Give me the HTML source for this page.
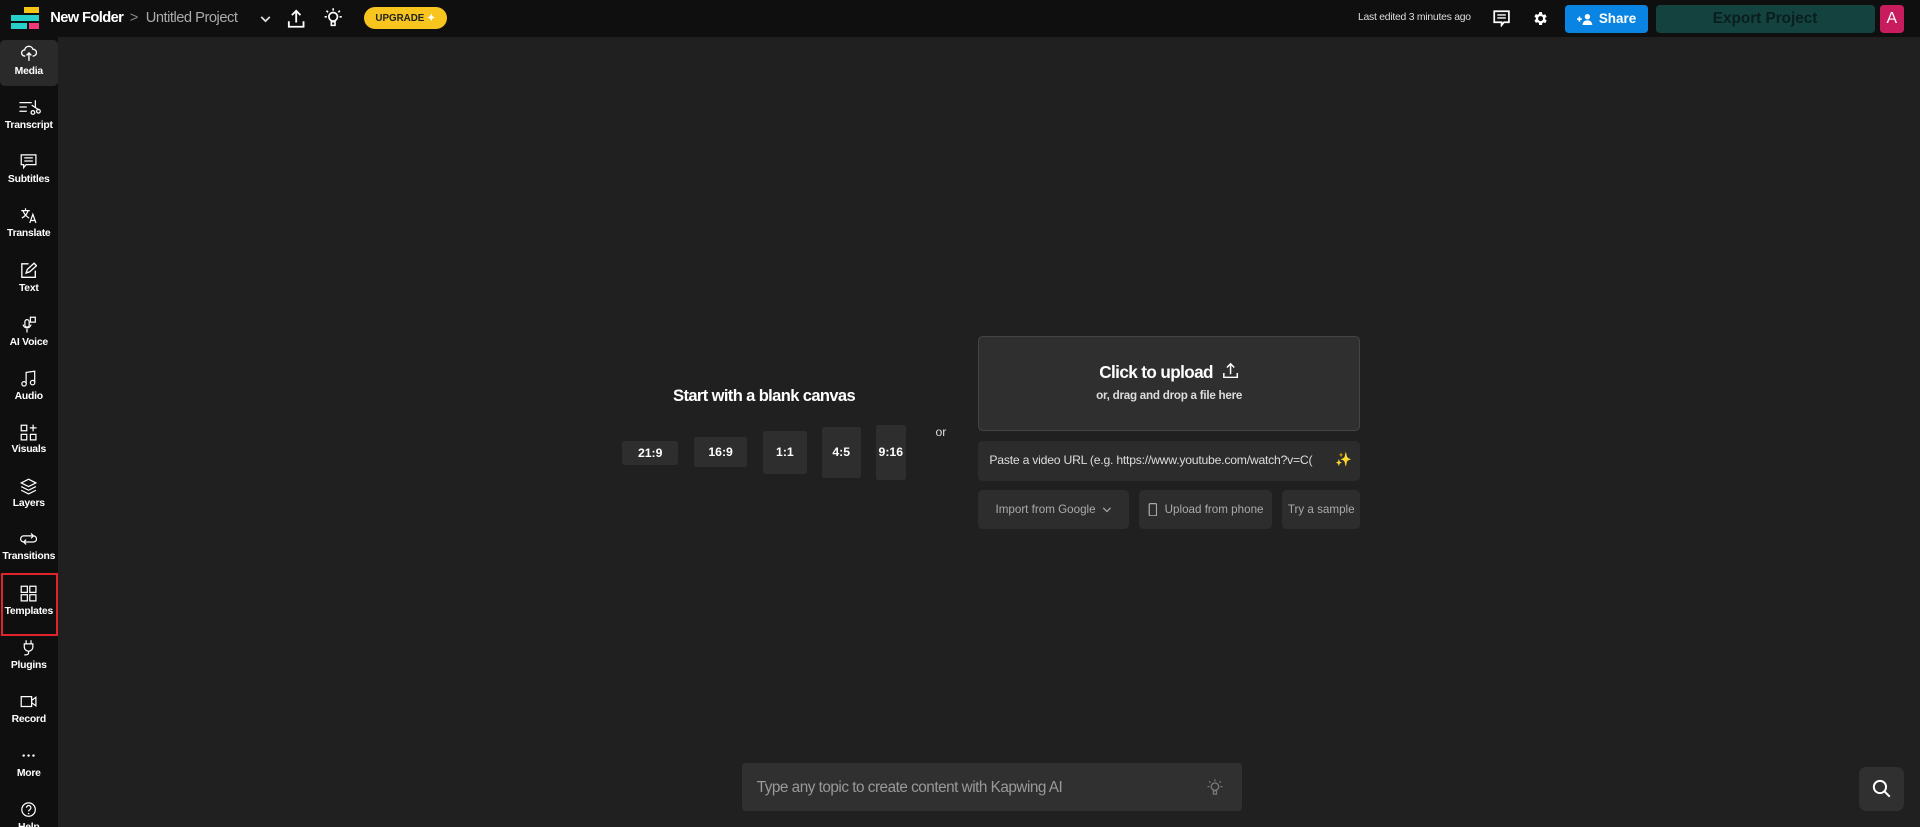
<!DOCTYPE html>
<html><head><meta charset="utf-8">
<style>
html,body{margin:0;padding:0;background:#202020;overflow:hidden;width:1920px;height:827px}
#w{zoom:1.22449;width:1568px;height:676px;position:relative;background:#202020;font-family:"Liberation Sans",sans-serif;color:#fff}
.a{position:absolute}
.top{left:0;top:0;width:1568px;height:30px;background:#0f0f0f}
.side{left:0;top:30px;width:47px;height:646px;background:#0f0f0f}
.it{position:absolute;left:0;width:47px;text-align:center;font-size:8.5px;font-weight:bold;color:#fff;letter-spacing:-0.2px}
.it svg{display:block;margin:0 auto 3px}
.rb{background:#2e2e2e;border-radius:2px;font-size:10px;font-weight:bold;display:flex;align-items:center;justify-content:center;position:absolute}
.btn{position:absolute;background:#2d2d2d;border-radius:4px;font-size:9.5px;color:#aaa;display:flex;align-items:center;justify-content:center;top:400px;height:32px}
</style></head><body><div id="w">
<div class="a top"></div>
<div class="a" style="left:20px;top:6px;width:12px;height:5px;background:#f5c518"></div>
<div class="a" style="left:9px;top:12px;width:23px;height:5px;background:#27d0c8"></div>
<div class="a" style="left:9px;top:19px;width:13px;height:5px;background:#27d0c8"></div>
<div class="a" style="left:24px;top:19px;width:8px;height:5px;background:#ee3a7a"></div>
<div class="a" style="left:41px;top:8px;font-size:12px;font-weight:bold;letter-spacing:-0.5px">New Folder</div>
<div class="a" style="left:106px;top:8px;font-size:12px;color:#888">&gt;</div>
<div class="a" style="left:119px;top:8px;font-size:12px;color:#aaa;letter-spacing:-0.4px">Untitled Project</div>
<svg class="a" style="left:212px;top:12px" width="9" height="7" viewBox="0 0 9 7"><path d="M1 1.5l3.5 3.5 3.5-3.5" stroke="#ddd" stroke-width="1.4" fill="none"/></svg>
<svg class="a" style="left:234px;top:7px" width="15" height="16" viewBox="0 0 15 16"><path d="M7.5 11V2M4 5l3.5-3.5L11 5M1.5 10v4.5h12V10" stroke="#fff" stroke-width="1.5" fill="none"/></svg>
<svg class="a" style="left:265px;top:6px" width="15" height="17" viewBox="0 0 15 17"><circle cx="7.5" cy="8" r="3.5" stroke="#fff" stroke-width="1.4" fill="none"/><path d="M6 12h3v3H6zM7.5 1v2M2 3l1.3 1.3M13 3l-1.3 1.3M0.5 8h1.8M12.7 8h1.8" stroke="#fff" stroke-width="1.3" fill="none"/></svg>
<div class="a" style="left:297px;top:6px;width:68px;height:18px;border-radius:9px;background:#f7c51e;color:#222;font-size:8px;font-weight:bold;display:flex;align-items:center;justify-content:center">UPGRADE&nbsp;<span style="color:#fff;font-size:8px">✦</span></div>
<div class="a" style="left:1109px;top:10px;font-size:8.5px;color:#ddd;letter-spacing:-0.2px">Last edited 3 minutes ago</div>
<svg class="a" style="left:1219px;top:8px" width="14" height="14" viewBox="0 0 14 14"><path d="M1 1h12v9H9l-2 2.5V10H1z" stroke="#fff" stroke-width="1.4" fill="none"/><path d="M3.5 4h7M3.5 6.5h7" stroke="#fff" stroke-width="1.1"/></svg>
<svg class="a" style="left:1251px;top:8px" width="14" height="14" viewBox="0 0 24 24"><path fill="#fff" d="M19.4 13a7.5 7.5 0 000-2l2.1-1.6-2-3.5-2.5 1a7.3 7.3 0 00-1.7-1L15 3h-4l-.4 2.6a7.3 7.3 0 00-1.7 1l-2.5-1-2 3.5L6.5 11a7.5 7.5 0 000 2l-2.1 1.6 2 3.5 2.5-1a7.3 7.3 0 001.7 1L11 21h4l.4-2.6a7.3 7.3 0 001.7-1l2.5 1 2-3.5zM13 15.5a3.5 3.5 0 110-7 3.5 3.5 0 010 7z" transform="translate(-1 0)"/></svg>
<div class="a" style="left:1278px;top:4px;width:68px;height:23px;background:#0a84e3;border-radius:3px;font-size:11px;font-weight:bold;display:flex;align-items:center;justify-content:center"><svg width="13" height="10" viewBox="0 0 13 10" style="margin-right:5px"><path d="M0 5h4M2 3v4" stroke="#fff" stroke-width="1.3"/><circle cx="8.5" cy="3" r="2.2" fill="#fff"/><path d="M4.5 10c0-3 2-4 4-4s4 1 4 4z" fill="#fff"/></svg>Share</div>
<div class="a" style="left:1352px;top:4px;width:179px;height:23px;background:#13423f;border-radius:3px;font-size:12.5px;font-weight:bold;line-height:23px;text-align:center;color:#0a1f1d">Export Project</div>
<div class="a" style="left:1535px;top:4px;width:20px;height:23px;background:#c91c5e;border-radius:3px;font-size:13px;line-height:23px;text-align:center">A</div>
<div class="a side"></div>
<div class="a" style="left:0;top:33px;width:47px;height:37px;background:#2a2a2a;border-radius:4px"></div>
<div class="it" style="top:37px"><svg width="13" height="14" viewBox="0 0 13 14"><path d="M3.5 9H3a2.5 2.5 0 010-5 3.5 3.5 0 016.8-.5A2.5 2.5 0 0110 9h-.5M6.5 13V6.5M4.5 8.5l2-2 2 2" stroke="#fff" stroke-width="1.1" fill="none"/></svg>Media</div>
<div class="it" style="top:81px"><svg width="20" height="14" viewBox="0 0 20 14"><path d="M2 3h10M2 6.5h6M2 10h6M15 1v6M12 5l6 4" stroke="#fff" stroke-width="1" fill="none"/><circle cx="13" cy="11" r="1.5" stroke="#fff" fill="none"/><circle cx="17.5" cy="10" r="1.5" stroke="#fff" fill="none"/></svg>Transcript</div>
<div class="it" style="top:125px"><svg width="14" height="14" viewBox="0 0 14 14"><path d="M1 1.5h12v8H5l-2 2.5v-2.5H1z" stroke="#fff" stroke-width="1" fill="none"/><path d="M3.5 4h7M3.5 6.5h7" stroke="#fff" stroke-width="1"/></svg>Subtitles</div>
<div class="it" style="top:169px"><svg width="14" height="14" viewBox="0 0 14 14"><path d="M1 3h7M4.5 1v2M2.5 3c1 3 3 5 5 6M6.5 3c-.5 2.5-2 4.5-5 6M8 13l2.5-7 2.5 7M9 11h3" stroke="#fff" stroke-width="1" fill="none"/></svg>Translate</div>
<div class="it" style="top:214px"><svg width="14" height="14" viewBox="0 0 14 14"><path d="M7 1.5H1.5v11h11V7M5 9l1-3 5.5-5 2 2L8 8z" stroke="#fff" stroke-width="1.1" fill="none"/></svg>Text</div>
<div class="it" style="top:258px"><svg width="14" height="14" viewBox="0 0 14 14"><rect x="4" y="3" width="3.5" height="6" rx="1.7" stroke="#fff" fill="none"/><path d="M2.5 7a3.3 3.3 0 006.5 0M5.7 10.5v3M8.5 1h4v4h-4z" stroke="#fff" fill="none"/></svg>AI Voice</div>
<div class="it" style="top:302px"><svg width="14" height="14" viewBox="0 0 14 14"><path d="M5 11V2l7-1v9" stroke="#fff" fill="none"/><circle cx="3.3" cy="11.3" r="1.8" stroke="#fff" fill="none"/><circle cx="10.3" cy="10.3" r="1.8" stroke="#fff" fill="none"/></svg>Audio</div>
<div class="it" style="top:346px"><svg width="14" height="14" viewBox="0 0 14 14"><path d="M1 1h4.5v4.5H1zM1 8.5h4.5V13H1zM8.5 8.5H13V13H8.5zM10.7 .5v5.5M8 3.2h5.5" stroke="#fff" fill="none"/></svg>Visuals</div>
<div class="it" style="top:390px"><svg width="14" height="14" viewBox="0 0 14 14"><path d="M7 1l6 3-6 3-6-3zM1 7l6 3 6-3M1 10l6 3 6-3" stroke="#fff" fill="none"/></svg>Layers</div>
<div class="it" style="top:434px"><svg width="14" height="13" viewBox="0 0 14 13"><path d="M3 4h8a2.5 2.5 0 010 5M11 9H3a2.5 2.5 0 010-5M9 2l2 2-2 2M5 7L3 9l2 2" stroke="#fff" fill="none"/></svg>Transitions</div>
<div class="a" style="left:1px;top:468px;width:43px;height:48px;border:2px solid #e1232b"></div>
<div class="it" style="top:478px"><svg width="14" height="14" viewBox="0 0 14 14"><path d="M1 1h5v5H1zM8 1h5v5H8zM1 8h5v5H1zM8 8h5v5H8z" stroke="#fff" fill="none"/></svg>Templates</div>
<div class="it" style="top:522px"><svg width="14" height="14" viewBox="0 0 14 14"><path d="M5 1v3M9 1v3M3.5 4h7v2.5a3.5 3.5 0 01-7 0zM7 10v1.5c0 1.5-2 1.5-3.5 1.5" stroke="#fff" fill="none"/></svg>Plugins</div>
<div class="it" style="top:566px"><svg width="14" height="14" viewBox="0 0 14 14"><path d="M1 3h8.5v8H1zM9.5 6l3.5-2.5v7L9.5 8" stroke="#fff" fill="none"/></svg>Record</div>
<div class="it" style="top:610px"><svg width="14" height="14" viewBox="0 0 14 14"><circle cx="3" cy="7" r="1" fill="#fff"/><circle cx="7" cy="7" r="1" fill="#fff"/><circle cx="11" cy="7" r="1" fill="#fff"/></svg>More</div>
<div class="it" style="top:654px"><svg width="14" height="14" viewBox="0 0 14 14"><circle cx="7" cy="7" r="5.5" stroke="#fff" fill="none"/><path d="M5.3 5.5a1.8 1.8 0 113 1.3c-.8.5-1.3.8-1.3 1.7" stroke="#fff" fill="none"/><circle cx="7" cy="10.3" r=".6" fill="#fff"/></svg>Help</div>

<div class="a" style="left:524px;top:315px;width:200px;text-align:center;font-size:13.5px;font-weight:bold;letter-spacing:-0.5px">Start with a blank canvas</div>
<div class="rb" style="left:508px;top:360px;width:46px;height:20px">21:9</div>
<div class="rb" style="left:567px;top:357px;width:43px;height:24px">16:9</div>
<div class="rb" style="left:623px;top:352px;width:36px;height:35px">1:1</div>
<div class="rb" style="left:671px;top:349px;width:32px;height:41px">4:5</div>
<div class="rb" style="left:715px;top:347px;width:25px;height:45px">9:16</div>
<div class="a" style="left:764px;top:347px;font-size:10px;color:#ddd">or</div>
<div class="a" style="left:799px;top:274px;width:310px;height:76px;background:#2f2f2f;border:1px solid #444;border-radius:4px;text-align:center">
<div style="margin-top:21px;font-size:14px;font-weight:bold;letter-spacing:-0.5px">Click to upload <svg width="14" height="14" viewBox="0 0 14 14" style="vertical-align:-1px;margin-left:4px"><path d="M7 10V2M4 4.5L7 1.5l3 3M1.5 9v3.5h11V9" stroke="#fff" stroke-width="1.2" fill="none"/></svg></div>
<div style="margin-top:5px;font-size:9.5px;font-weight:bold;color:#ddd;letter-spacing:-0.2px">or, drag and drop a file here</div></div>
<div class="a" style="left:799px;top:360px;width:312px;height:33px;background:#2c2c2c;border-radius:4px"><div style="position:absolute;left:9px;top:10px;font-size:10px;color:#ddd;white-space:nowrap;width:278px;overflow:hidden;letter-spacing:-0.2px">Paste a video URL (e.g. https://www.youtube.com/watch?v=C(</div><div style="position:absolute;right:7px;top:9px;font-size:11px;color:#f5c518">✨</div></div>
<div class="btn" style="left:799px;width:123px">Import from Google&nbsp;&nbsp;<svg width="8" height="6" viewBox="0 0 8 6"><path d="M1 1.5l3 3 3-3" stroke="#aaa" fill="none"/></svg></div>
<div class="btn" style="left:930px;width:109px"><svg width="8" height="11" viewBox="0 0 8 11" style="margin-right:6px"><rect x="1" y=".5" width="6" height="10" rx="1" stroke="#aaa" fill="none"/></svg>Upload from phone</div>
<div class="btn" style="left:1047px;width:64px">Try a sample</div>

<div class="a" style="left:606px;top:623px;width:408px;height:39px;background:#303030;border-radius:3px"><div style="position:absolute;left:12px;top:13px;font-size:12.5px;color:#999;letter-spacing:-0.4px">Type any topic to create content with Kapwing AI</div>
<svg style="position:absolute;left:380px;top:12px" width="13" height="15" viewBox="0 0 15 17"><circle cx="7.5" cy="8" r="3.5" stroke="#777" stroke-width="1.3" fill="none"/><path d="M6 12h3v3H6zM7.5 1v2M2 3l1.3 1.3M13 3l-1.3 1.3M0.5 8h1.8M12.7 8h1.8" stroke="#777" stroke-width="1.2" fill="none"/></svg></div>
<div class="a" style="left:1518px;top:626px;width:37px;height:36px;background:#303030;border-radius:6px"><svg style="position:absolute;left:11px;top:10px" width="16" height="16" viewBox="0 0 16 16"><circle cx="6.5" cy="6.5" r="5" stroke="#fff" stroke-width="1.6" fill="none"/><path d="M10 10l4.5 4.5" stroke="#fff" stroke-width="1.6"/></svg></div>
</div></body></html>
